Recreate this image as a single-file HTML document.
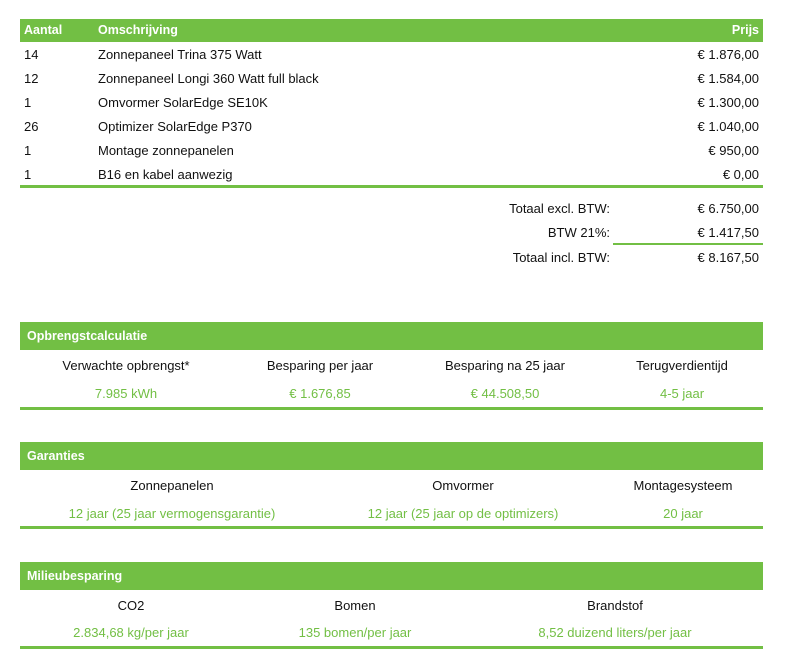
<!DOCTYPE html>
<html><head><meta charset="utf-8"><style>
*{margin:0;padding:0;box-sizing:border-box}
body{width:800px;height:670px;background:#fff;font-family:"Liberation Sans",sans-serif;font-size:13px;color:#111;position:relative;overflow:hidden}
.a{position:absolute;white-space:nowrap;line-height:15px}
.bar{position:absolute;left:20px;width:743px;background:#72bf44;color:#fff;font-weight:bold}
.ln{position:absolute;left:20px;width:743px;height:3px;background:#72bf44}
.c{transform:translateX(-50%)}
.g{color:#72bf44}
.b{font-weight:bold;color:#fff;font-size:12.5px}
</style></head><body>
<div class="bar" style="top:19px;height:23px"></div>
<div class="a b" style="left:24px;top:23px">Aantal</div>
<div class="a b" style="left:98px;top:23px">Omschrijving</div>
<div class="a b" style="right:41px;top:23px">Prijs</div>

<div class="a" style="left:24px;top:47px">14</div><div class="a" style="left:98px;top:47px">Zonnepaneel Trina 375 Watt</div><div class="a" style="right:41px;top:47px">€ 1.876,00</div>
<div class="a" style="left:24px;top:71px">12</div><div class="a" style="left:98px;top:71px">Zonnepaneel Longi 360 Watt full black</div><div class="a" style="right:41px;top:71px">€ 1.584,00</div>
<div class="a" style="left:24px;top:95px">1</div><div class="a" style="left:98px;top:95px">Omvormer SolarEdge SE10K</div><div class="a" style="right:41px;top:95px">€ 1.300,00</div>
<div class="a" style="left:24px;top:119px">26</div><div class="a" style="left:98px;top:119px">Optimizer SolarEdge P370</div><div class="a" style="right:41px;top:119px">€ 1.040,00</div>
<div class="a" style="left:24px;top:143px">1</div><div class="a" style="left:98px;top:143px">Montage zonnepanelen</div><div class="a" style="right:41px;top:143px">€ 950,00</div>
<div class="a" style="left:24px;top:167px">1</div><div class="a" style="left:98px;top:167px">B16 en kabel aanwezig</div><div class="a" style="right:41px;top:167px">€ 0,00</div>
<div class="ln" style="top:185px"></div>

<div class="a" style="right:190px;top:201px">Totaal excl. BTW:</div><div class="a" style="right:41px;top:201px">€ 6.750,00</div>
<div class="a" style="right:190px;top:225px">BTW 21%:</div><div class="a" style="right:41px;top:225px">€ 1.417,50</div>
<div style="position:absolute;left:613px;width:150px;top:243px;height:2px;background:#72bf44"></div>
<div class="a" style="right:190px;top:250px">Totaal incl. BTW:</div><div class="a" style="right:41px;top:250px">€ 8.167,50</div>

<div class="bar" style="top:322px;height:28px"></div>
<div class="a b" style="left:27px;top:329px">Opbrengstcalculatie</div>
<div class="a c" style="left:126px;top:358px">Verwachte opbrengst*</div>
<div class="a c" style="left:320px;top:358px">Besparing per jaar</div>
<div class="a c" style="left:505px;top:358px">Besparing na 25 jaar</div>
<div class="a c" style="left:682px;top:358px">Terugverdientijd</div>
<div class="a c g" style="left:126px;top:386px">7.985 kWh</div>
<div class="a c g" style="left:320px;top:386px">€ 1.676,85</div>
<div class="a c g" style="left:505px;top:386px">€ 44.508,50</div>
<div class="a c g" style="left:682px;top:386px">4-5 jaar</div>
<div class="ln" style="top:407px"></div>

<div class="bar" style="top:442px;height:28px"></div>
<div class="a b" style="left:27px;top:449px">Garanties</div>
<div class="a c" style="left:172px;top:478px">Zonnepanelen</div>
<div class="a c" style="left:463px;top:478px">Omvormer</div>
<div class="a c" style="left:683px;top:478px">Montagesysteem</div>
<div class="a c g" style="left:172px;top:506px">12 jaar (25 jaar vermogensgarantie)</div>
<div class="a c g" style="left:463px;top:506px">12 jaar (25 jaar op de optimizers)</div>
<div class="a c g" style="left:683px;top:506px">20 jaar</div>
<div class="ln" style="top:526px"></div>

<div class="bar" style="top:562px;height:28px"></div>
<div class="a b" style="left:27px;top:569px">Milieubesparing</div>
<div class="a c" style="left:131px;top:598px">CO2</div>
<div class="a c" style="left:355px;top:598px">Bomen</div>
<div class="a c" style="left:615px;top:598px">Brandstof</div>
<div class="a c g" style="left:131px;top:625px">2.834,68 kg/per jaar</div>
<div class="a c g" style="left:355px;top:625px">135 bomen/per jaar</div>
<div class="a c g" style="left:615px;top:625px">8,52 duizend liters/per jaar</div>
<div class="ln" style="top:646px"></div>
</body></html>
